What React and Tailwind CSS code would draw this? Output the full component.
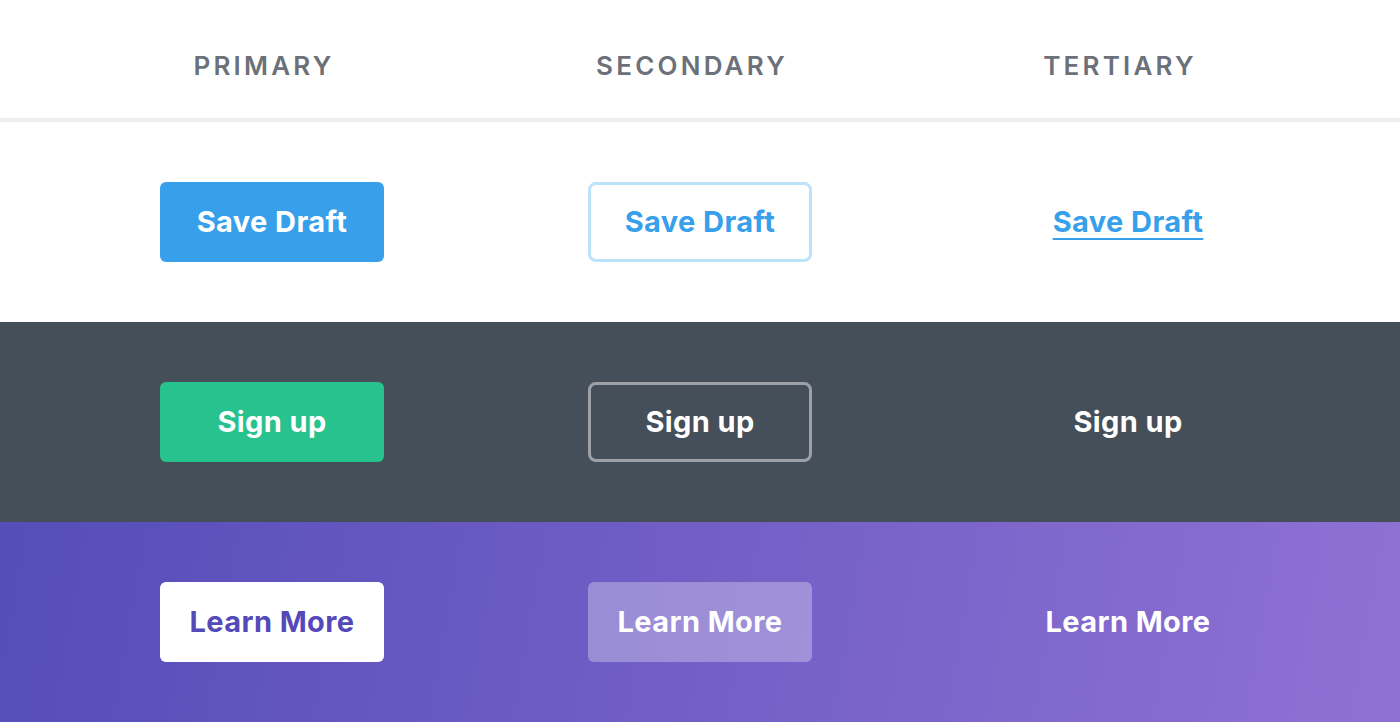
export default function App() {
  const cell = "w-[224px] h-[80px] flex items-center justify-center";
  const head = "w-[224px] pr-[16px] text-center text-[26px] font-semibold tracking-[3.2px] text-[#6b7079]";
  const font = { fontFamily: "Inter, Lato, sans-serif" };

  return (
    <div className="w-[1400px] h-[722px] overflow-hidden bg-white" style={font}>
      {/* HEADER */}
      <div className="h-[122px] flex items-center pt-[12px] pl-[160px] gap-[204px] border-b-4 border-[#eeeef2]">
        <div className={head}>PRIMARY</div>
        <div className={head}>SECONDARY</div>
        <div className={head}>TERTIARY</div>
      </div>

      {/* WHITE ROW */}
      <div className="h-[200px] flex items-center pl-[160px] gap-[204px] text-[29px] font-bold tracking-[0.4px]">
        <button className={`${cell} rounded-md bg-[#389feb] text-white`}>Save Draft</button>
        <button className={`${cell} rounded-lg border-[3px] border-[#bde2fb] text-[#389feb]`}>Save Draft</button>
        <div className={cell}>
          <span className="text-[#389feb] underline decoration-2 underline-offset-[6px]">Save Draft</span>
        </div>
      </div>

      {/* DARK ROW */}
      <div className="h-[200px] flex items-center pl-[160px] gap-[204px] bg-[#454f59] text-[29px] font-bold tracking-[0.4px] text-white">
        <button className={`${cell} rounded-md bg-[#27c28d]`}>Sign up</button>
        <button className={`${cell} rounded-lg border-[3px] border-[#9ba1a7]`}>Sign up</button>
        <div className={cell}>Sign up</div>
      </div>

      {/* GRADIENT ROW */}
      <div className="h-[200px] flex items-center pl-[160px] gap-[204px] bg-linear-[100deg] from-[#554db9] to-[#8f71d3] text-[29px] font-bold tracking-[0.4px] text-white">
        <button className={`${cell} rounded-md bg-white text-[#5349b8]`}>Learn More</button>
        <button className={`${cell} rounded-md bg-white/30`}>Learn More</button>
        <div className={cell}>Learn More</div>
      </div>
    </div>
  );
}
